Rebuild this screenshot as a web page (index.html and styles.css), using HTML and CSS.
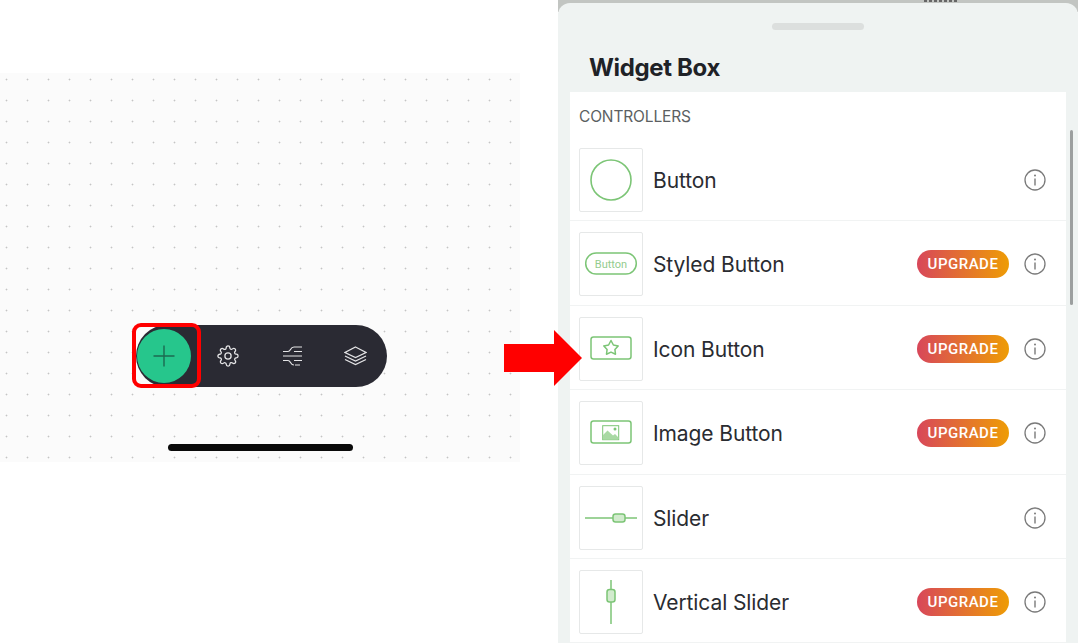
FILE: index.html
```html
<!DOCTYPE html>
<html lang="en">
<head>
    <meta charset="UTF-8">
    <title>Widget Box</title>
    <link rel="stylesheet" href="styles.css">
</head>
<body>
    <svg class="defs" width="0" height="0">
        <symbol id="info" viewBox="0 0 22 22">
            <circle cx="11" cy="11" r="10" fill="none" stroke="#7a7a7a" stroke-width="1.3"/>
            <path d="M11 9.5V16.5" stroke="#7a7a7a" stroke-width="1.4"/>
            <circle cx="11" cy="6.6" r="1" fill="#7a7a7a"/>
        </symbol>
    </svg>

    <div class="page">
        <section class="left">
            <div class="canvas">
                <div class="toolbar">
                    <div class="add-btn">
                        <svg width="22" height="22" viewBox="0 0 22 22"><path d="M11 0.5V21.5M0.5 11H21.5" stroke="#1c6a50" stroke-width="1.4"/></svg>
                    </div>
                    <svg class="tool-icon gear" width="22" height="22" viewBox="0 0 24 24" fill="none" stroke="#e4e4e6" stroke-width="1.4">
                        <circle cx="12" cy="12" r="3.4"/>
                        <path d="M19.4 15a1.65 1.65 0 0 0 .33 1.82l.06.06a2 2 0 0 1 0 2.83 2 2 0 0 1-2.83 0l-.06-.06a1.65 1.65 0 0 0-1.82-.33 1.65 1.65 0 0 0-1 1.51V21a2 2 0 0 1-2 2 2 2 0 0 1-2-2v-.09A1.65 1.65 0 0 0 9 19.4a1.65 1.65 0 0 0-1.82.33l-.06.06a2 2 0 0 1-2.83 0 2 2 0 0 1 0-2.83l.06-.06a1.65 1.65 0 0 0 .33-1.82 1.65 1.65 0 0 0-1.51-1H3a2 2 0 0 1-2-2 2 2 0 0 1 2-2h.09A1.65 1.65 0 0 0 4.6 9a1.65 1.65 0 0 0-.33-1.82l-.06-.06a2 2 0 0 1 0-2.83 2 2 0 0 1 2.83 0l.06.06a1.65 1.65 0 0 0 1.82.33H9a1.65 1.65 0 0 0 1-1.51V3a2 2 0 0 1 2-2 2 2 0 0 1 2 2v.09a1.65 1.65 0 0 0 1 1.51 1.65 1.65 0 0 0 1.82-.33l.06-.06a2 2 0 0 1 2.83 0 2 2 0 0 1 0 2.83l-.06.06a1.65 1.65 0 0 0-.33 1.82V9a1.65 1.65 0 0 0 1.51 1H21a2 2 0 0 1 2 2 2 2 0 0 1-2 2h-.09a1.65 1.65 0 0 0-1.51 1z"/>
                    </svg>
                    <svg class="tool-icon mixer" width="20" height="20" viewBox="0 0 20 20" fill="none" stroke="#e4e4e6" stroke-width="1.2">
                        <path d="M12 1H20M1 5.5H6C9 5.5 8 1 12 1M12 5.5H20M1 10H20M1 14.5H6C9 14.5 8 19 12 19M12 14.5H20M13 19H18"/>
                    </svg>
                    <svg class="tool-icon layers" width="23" height="20" viewBox="0 0 23 20" fill="none" stroke="#e4e4e6" stroke-width="1.2">
                        <path d="M11.5 1L22 6.5L11.5 11.5L1 6.5Z"/>
                        <path d="M1 10L11.5 15L22 10M1 13.5L11.5 18.5L22 13.5"/>
                    </svg>
                    <div class="highlight"></div>
                </div>
                <div class="home-bar"></div>
            </div>
        </section>

        <section class="sheet-wrap">
            <div class="status-scrap"></div>
            <div class="sheet">
                <div class="handle"></div>
                <h1>Widget Box</h1>
                <div class="list">
                    <div class="list-title">CONTROLLERS</div>

                    <div class="row">
                        <div class="thumb">
                            <svg width="62" height="62" viewBox="0 0 62 62" fill="none" stroke="#7cc576" stroke-width="1.6"><circle cx="31" cy="31" r="20"/></svg>
                        </div>
                        <span class="name">Button</span>
                        <svg class="info"><use href="#info"/></svg>
                    </div>

                    <div class="row">
                        <div class="thumb">
                            <svg width="62" height="62" viewBox="0 0 62 62" fill="none" stroke="#7cc576" stroke-width="1.5">
                                <rect x="5.7" y="20" width="50.6" height="21" rx="10.5"/>
                                <text x="31" y="34.6" text-anchor="middle" class="thumb-text">Button</text>
                            </svg>
                        </div>
                        <span class="name">Styled Button</span>
                        <span class="upgrade">UPGRADE</span>
                        <svg class="info"><use href="#info"/></svg>
                    </div>

                    <div class="row">
                        <div class="thumb">
                            <svg width="62" height="62" viewBox="0 0 62 62" fill="none" stroke="#7cc576" stroke-width="1.5">
                                <rect x="11" y="19" width="40" height="22" rx="2.5"/>
                                <path d="M31 22.5L33.4 27L38.2 27.9L34.9 31.4L35.5 36.2L31 34.1L26.5 36.2L27.1 31.4L23.8 27.9L28.6 27Z" stroke-linejoin="round"/>
                            </svg>
                        </div>
                        <span class="name">Icon Button</span>
                        <span class="upgrade">UPGRADE</span>
                        <svg class="info"><use href="#info"/></svg>
                    </div>

                    <div class="row">
                        <div class="thumb">
                            <svg width="62" height="62" viewBox="0 0 62 62" fill="none" stroke="#7cc576" stroke-width="1.5">
                                <rect x="11" y="19" width="40" height="22" rx="2.5"/>
                                <rect x="22.7" y="23.7" width="16" height="14" fill="#fff" stroke-width="1"/>
                                <path d="M23 37.5V33L27.5 28.5L33 33.5L35 32L38.5 35.5V37.5Z" fill="#a9d9a4" stroke="none"/>
                                <circle cx="35" cy="27" r="1.5" fill="#7cc576" stroke="none"/>
                            </svg>
                        </div>
                        <span class="name">Image Button</span>
                        <span class="upgrade">UPGRADE</span>
                        <svg class="info"><use href="#info"/></svg>
                    </div>

                    <div class="row">
                        <div class="thumb">
                            <svg width="62" height="62" viewBox="0 0 62 62" fill="none" stroke="#7cc576" stroke-width="1.5">
                                <path d="M5 31H57"/>
                                <rect x="33" y="27" width="12" height="8" rx="2.5" fill="#d2ebce"/>
                            </svg>
                        </div>
                        <span class="name">Slider</span>
                        <svg class="info"><use href="#info"/></svg>
                    </div>

                    <div class="row">
                        <div class="thumb">
                            <svg width="62" height="62" viewBox="0 0 62 62" fill="none" stroke="#7cc576" stroke-width="1.5">
                                <path d="M31 9V53"/>
                                <rect x="27" y="18.5" width="8" height="12.5" rx="2.5" fill="#d2ebce"/>
                            </svg>
                        </div>
                        <span class="name">Vertical Slider</span>
                        <span class="upgrade">UPGRADE</span>
                        <svg class="info"><use href="#info"/></svg>
                    </div>
                </div>
                <div class="scrollbar"></div>
            </div>
        </section>

        <svg class="arrow" width="78" height="56" viewBox="0 0 78 56"><path d="M0 14H50V0L78 28L50 56V42H0Z" fill="#ff0000"/></svg>
    </div>
</body>
</html>
```

FILE: styles.css
```css
html, body {
    margin: 0;
    padding: 0;
    background: #fff;
}
.defs {
    position: absolute;
}
.page {
    position: relative;
    width: 1078px;
    height: 643px;
    overflow: hidden;
    display: flex;
    gap: 38px;
    font-family: Inter, "Liberation Sans", sans-serif;
}

/* left side, the app canvas */
.left {
    width: 520px;
    padding-top: 73px;
}
.canvas {
    height: 389px;
    box-sizing: border-box;
    padding-top: 252px;
    display: flex;
    flex-direction: column;
    align-items: center;
    background-color: #fbfbfb;
    background-image: radial-gradient(circle, #c4c4c4 0.8px, transparent 1.1px);
    background-size: 21px 21px;
    background-position: -4px -4px;
}
.toolbar {
    position: relative;
    width: 251px;
    height: 62px;
    margin-left: 3px;
    border-radius: 31px;
    background: #2a2a33;
    display: flex;
    align-items: center;
}
.add-btn {
    width: 54px;
    height: 54px;
    margin-left: 1px;
    margin-top: -1px;
    border-radius: 50%;
    background: #26c68c;
    display: flex;
    align-items: center;
    justify-content: center;
}
.tool-icon {
    flex: none;
}
.gear {
    margin-left: 26px;
}
.mixer {
    margin-left: 43px;
}
.layers {
    margin-left: 42px;
}
.highlight {
    position: absolute;
    left: -4px;
    top: -2px;
    width: 69px;
    height: 65px;
    box-sizing: border-box;
    border: 4px solid #ff0000;
    border-radius: 9px;
}
.home-bar {
    width: 185px;
    height: 7px;
    margin-top: 57px;
    border-radius: 4px;
    background: #0a0a0a;
}

/* right side, the widget box sheet */
.sheet-wrap {
    position: relative;
    width: 520px;
    height: 643px;
    background: linear-gradient(#c2c5c2, #c2c5c2 12px, #fff 12px);
}
.status-scrap {
    position: absolute;
    left: 366px;
    top: 0;
    width: 34px;
    height: 2px;
    background: repeating-linear-gradient(90deg, #666 0 3px, transparent 3px 5px);
}
.sheet {
    position: relative;
    margin-top: 3px;
    height: 640px;
    box-sizing: border-box;
    padding-top: 20px;
    border-radius: 12px 12px 0 0;
    background: #eff3f2;
}
.handle {
    width: 92px;
    height: 7px;
    margin-left: 214px;
    border-radius: 4px;
    background: #dcdfde;
}
h1 {
    margin: 22px 0 0 31px;
    font-size: 24px;
    line-height: 32px;
    font-weight: 700;
    letter-spacing: -0.35px;
    color: #1f2227;
}
.list {
    margin: 8px 12px 0;
    background: #fff;
    height: 551px;
    overflow: hidden;
}
.list-title {
    height: 45px;
    box-sizing: border-box;
    padding: 16px 0 0 9px;
    font-size: 15.5px;
    line-height: 18px;
    letter-spacing: -0.15px;
    color: #5c5f62;
}
.row {
    height: 84.4px;
    box-sizing: border-box;
    padding: 11px 20px 0 9px;
    border-bottom: 1px solid #f1f3f3;
    display: flex;
    align-items: flex-start;
}
.thumb {
    flex: none;
    width: 64px;
    height: 64px;
    box-sizing: border-box;
    border: 1px solid #e6e8e8;
    border-radius: 2px;
}
.thumb svg {
    display: block;
}
.thumb-text {
    font-family: Roboto, "Liberation Sans", sans-serif;
    font-size: 11px;
    fill: #93cc8e;
    stroke: none;
}
.name {
    margin-left: 10px;
    margin-top: 19px;
    flex: 1;
    font-size: 21px;
    line-height: 28px;
    letter-spacing: -0.1px;
    color: #2a2c31;
}
.upgrade {
    width: 92px;
    height: 28px;
    margin-top: 18px;
    margin-right: 15px;
    border-radius: 14px;
    background: linear-gradient(90deg, #d8475a, #ee9c05);
    color: #fff;
    font-family: Roboto, "Liberation Sans", sans-serif;
    font-size: 15px;
    font-weight: 500;
    line-height: 28px;
    letter-spacing: 0.5px;
    text-align: center;
}
.info {
    flex: none;
    width: 22px;
    height: 22px;
    margin-top: 21px;
}
.scrollbar {
    position: absolute;
    left: 512px;
    top: 127px;
    width: 3px;
    height: 175px;
    border-radius: 2px;
    background: #9c9f9f;
}

.arrow {
    position: absolute;
    left: 504px;
    top: 330px;
}
```
